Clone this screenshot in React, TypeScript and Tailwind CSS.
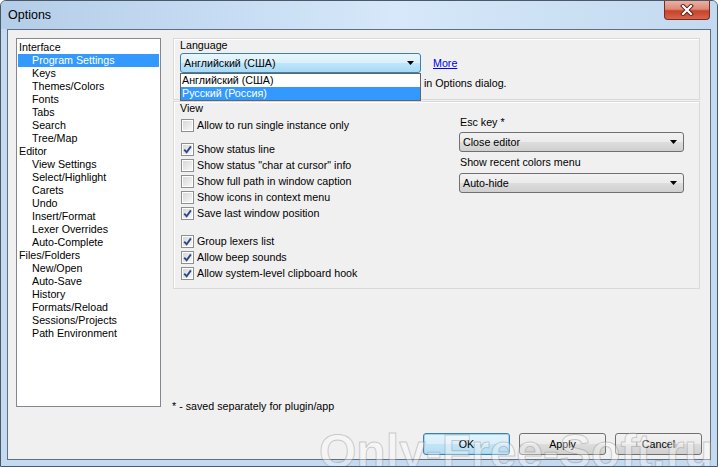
import React from "react";

const treeItems: { label: string; child: boolean; selected?: boolean }[] = [
  { label: "Interface", child: false },
  { label: "Program Settings", child: true, selected: true },
  { label: "Keys", child: true },
  { label: "Themes/Colors", child: true },
  { label: "Fonts", child: true },
  { label: "Tabs", child: true },
  { label: "Search", child: true },
  { label: "Tree/Map", child: true },
  { label: "Editor", child: false },
  { label: "View Settings", child: true },
  { label: "Select/Highlight", child: true },
  { label: "Carets", child: true },
  { label: "Undo", child: true },
  { label: "Insert/Format", child: true },
  { label: "Lexer Overrides", child: true },
  { label: "Auto-Complete", child: true },
  { label: "Files/Folders", child: false },
  { label: "New/Open", child: true },
  { label: "Auto-Save", child: true },
  { label: "History", child: true },
  { label: "Formats/Reload", child: true },
  { label: "Sessions/Projects", child: true },
  { label: "Path Environment", child: true },
];

function Arrow(): React.JSX.Element {
  return (
    <svg width="7" height="4" viewBox="0 0 7 4" className="shrink-0">
      <path d="M0 0 H7 L3.5 4 Z" fill="#000" />
    </svg>
  );
}

function Combo({ value, width, focused }: { value: string; width: string; focused?: boolean }): React.JSX.Element {
  const skin = focused
    ? "border-[#3c7fb1] bg-[linear-gradient(to_bottom,#eaf6fd_0%,#d9f0fc_50%,#bee6fd_51%,#a7d9f5_100%)]"
    : "border-[#707070] bg-[linear-gradient(to_bottom,#f2f2f2_0%,#ebebeb_50%,#dddddd_51%,#cfcfcf_100%)]";
  return (
    <div className={`flex h-[20px] items-center justify-between rounded-[3px] border pl-[3px] pr-[6px] ${width} ${skin}`}>
      <span className="leading-[13px]">{value}</span>
      <Arrow />
    </div>
  );
}

function CheckBox({ checked }: { checked: boolean }): React.JSX.Element {
  return (
    <div className="flex h-[13px] w-[13px] shrink-0 items-center justify-center border border-[#8e8f8f] bg-white">
      <div className="relative flex h-[9px] w-[9px] items-center justify-center bg-[linear-gradient(135deg,#d8d8d8,#f7f7f7)]">
        {checked ? (
          <svg width="11" height="11" viewBox="0 0 11 11" className="absolute -left-[1px] -top-[1px]">
            <path d="M2.2 5.6 L4.6 8.2 L8.9 2.4" fill="none" stroke="#2c4a8c" strokeWidth="1.9" />
          </svg>
        ) : null}
      </div>
    </div>
  );
}

function Check({ label, checked, className = "" }: { label: string; checked: boolean; className?: string }): React.JSX.Element {
  return (
    <div className={`flex h-[16px] items-center gap-[3px] ${className}`}>
      <CheckBox checked={checked} />
      <span className="leading-[13px]">{label}</span>
    </div>
  );
}

function DialogButton({ label, focused }: { label: string; focused?: boolean }): React.JSX.Element {
  const skin = focused
    ? "border-[#3c7fb1] bg-[linear-gradient(to_bottom,#e5f4fc_0%,#d7eefb_50%,#c2e4f7_51%,#b3dcf3_100%)] shadow-[inset_0_0_0_1px_#9fd5f2]"
    : "border-[#707070] bg-[linear-gradient(to_bottom,#f2f2f2_0%,#ebebeb_50%,#dddddd_51%,#cfcfcf_100%)]";
  return (
    <button type="button" className={`flex h-[22px] w-[87px] items-center justify-center rounded-[3px] border ${skin}`}>
      {label}
    </button>
  );
}

export default function App(): React.JSX.Element {
  return (
    <div className="relative h-[467px] w-[718px] overflow-hidden rounded-t-[6px] border border-[#4a5868] bg-[#c4daf0] font-['Liberation_Sans',Arial,sans-serif] text-[10.7px] text-black">
      {/* title bar */}
      <div className="flex h-[28px] items-start justify-between bg-[linear-gradient(to_right,#b4cde8_0%,#c9def4_35%,#d6e8f9_55%,#c3d9ef_100%)]">
        <span className="pl-[7px] pt-[7px] text-[12.5px] leading-[14px]">Options</span>
        <div className="mr-[7px] flex h-[19px] w-[46px] items-center justify-center rounded-b-[4px] border border-t-0 border-[#7b2a1d] bg-[linear-gradient(to_bottom,#eab0a2_0%,#dc8b78_45%,#c4432c_55%,#d8654b_100%)]">
          <svg width="14" height="12" viewBox="0 0 14 12">
            <path d="M3 2 L11 10 M11 2 L3 10" stroke="#5a1b12" strokeWidth="4" strokeLinecap="square" />
            <path d="M3 2 L11 10 M11 2 L3 10" stroke="#ffffff" strokeWidth="2.2" strokeLinecap="square" />
          </svg>
        </div>
      </div>

      {/* client area */}
      <div className="mx-[6px] h-[431px] border border-[#5f6f82] bg-[#f0f0f0] px-[8px] pt-[8px]">
        <div className="flex h-[375px] items-start gap-[12px]">
          {/* tree */}
          <div className="h-[369px] w-[145px] shrink-0 border border-[#828790] bg-white px-[1px] pt-[2px]">
            {treeItems.map((item) => (
              <div
                key={item.label}
                className={`h-[13px] leading-[13px] ${item.child ? "pl-[14px]" : "pl-[1px]"} ${item.selected ? "bg-[#3399ff] text-white" : ""}`}
              >
                {item.label}
              </div>
            ))}
          </div>

          {/* right side */}
          <div className="flex w-[527px] flex-col">
            <div className="h-[62px] border border-[#d9d9d9] px-[6px] shadow-[inset_1px_1px_0_#ffffff]">
              <div className="leading-[12px]">Language</div>
              <div className="mt-[2px] flex items-center">
                <div className="relative">
                  <Combo value="Английский (США)" width="w-[241px]" focused />
                  <div className="absolute left-0 top-full z-10 w-[241px] border border-[#646464] bg-white">
                    <div className="h-[13px] pl-[1px] leading-[13px]">Английский (США)</div>
                    <div className="h-[13px] bg-[#3399ff] pl-[1px] leading-[13px] text-white">Русский (Россия)</div>
                  </div>
                </div>
                <span className="ml-[12px] text-[#0000ee] underline">More</span>
              </div>
              <div className="mt-[4px] pl-[244px] leading-[13px]">in Options dialog.</div>
            </div>

            <div className="mt-[1px] h-[188px] border border-[#d9d9d9] px-[6px] shadow-[inset_1px_1px_0_#ffffff]">
              <div className="leading-[12px]">View</div>
              <div className="flex">
                <div className="w-[279px] pl-[1px] pt-[3px]">
                  <Check label="Allow to run single instance only" checked={false} />
                  <Check label="Show status line" checked className="mt-[8px]" />
                  <Check label={'Show status "char at cursor" info'} checked={false} />
                  <Check label="Show full path in window caption" checked={false} />
                  <Check label="Show icons in context menu" checked={false} />
                  <Check label="Save last window position" checked />
                  <Check label="Group lexers list" checked className="mt-[12px]" />
                  <Check label="Allow beep sounds" checked />
                  <Check label="Allow system-level clipboard hook" checked />
                </div>
                <div className="flex w-[225px] flex-col">
                  <div className="mt-[2px] pl-[1px] leading-[13px]">Esc key *</div>
                  <div className="mt-[3px]">
                    <Combo value="Close editor" width="w-[225px]" />
                  </div>
                  <div className="mt-[4px] pl-[1px] leading-[13px]">Show recent colors menu</div>
                  <div className="mt-[4px]">
                    <Combo value="Auto-hide" width="w-[225px]" />
                  </div>
                </div>
              </div>
            </div>

            <div className="mt-[111px] -ml-[1px] leading-[13px]">* - saved separately for plugin/app</div>
          </div>
        </div>

        <div className="mt-[20px] flex justify-end gap-[9px]">
          <DialogButton label="OK" focused />
          <DialogButton label="Apply" />
          <DialogButton label="Cancel" />
        </div>
      </div>

      {/* watermark */}
      <div className="pointer-events-none absolute left-[318px] top-[427px] whitespace-nowrap text-[48px] font-bold leading-[48px] text-white/35 [-webkit-text-stroke:1px_rgba(120,120,120,0.35)]">
        Only-Free-Soft.ru
      </div>
    </div>
  );
}
